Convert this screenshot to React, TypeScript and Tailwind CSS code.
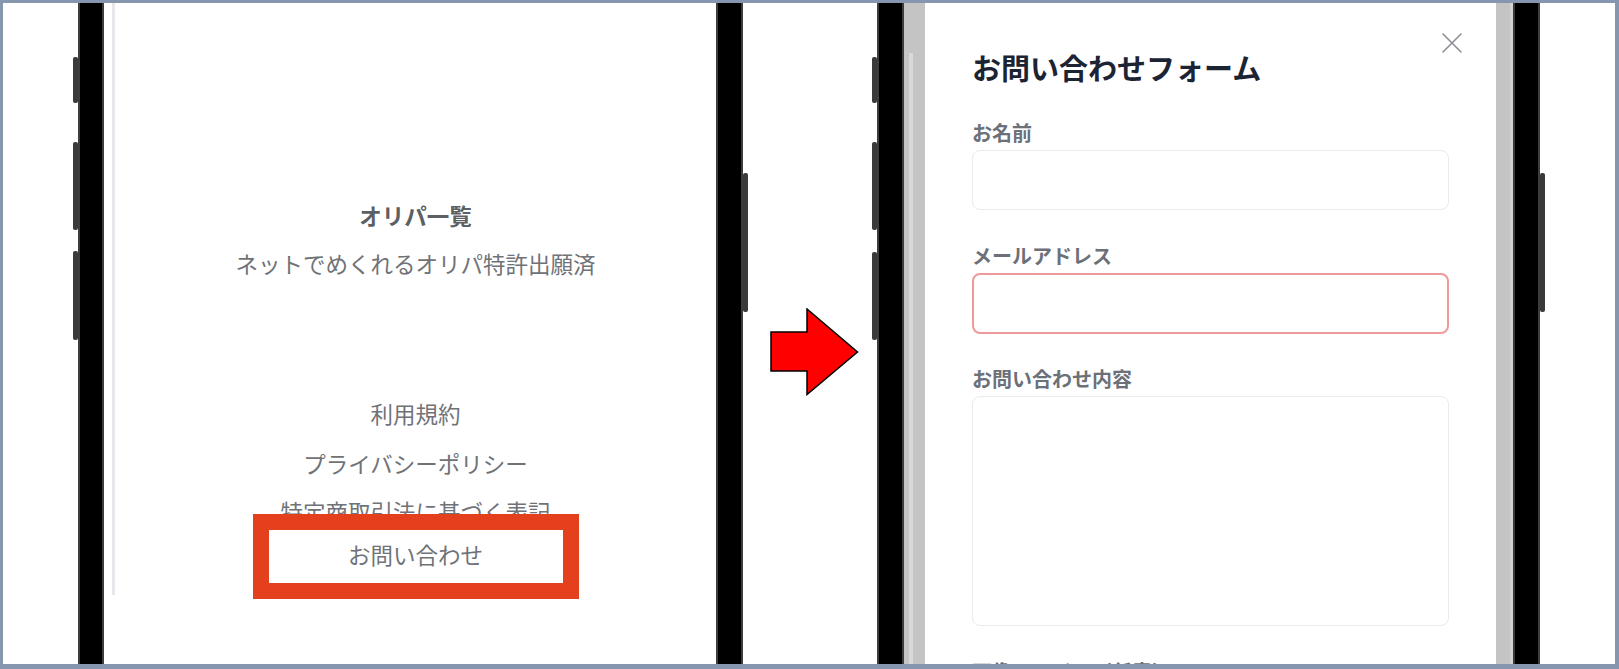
import React from "react";

const FONT = { fontFamily: '"Noto Sans CJK JP", "Noto Sans", sans-serif' };

function SideButtons({ items }: { items: { mt: number; h: number }[] }) {
  return (
    <div className="flex w-[5px] shrink-0 flex-col">
      {items.map((b, i) => (
        <div
          key={i}
          className="w-[5px] shrink-0 rounded-[2px] bg-[#3a3a3a]"
          style={{ marginTop: b.mt, height: b.h }}
        />
      ))}
    </div>
  );
}

function Bar({ w }: { w: string }) {
  return <div className={`${w} h-full shrink-0 border-x-2 border-[#3c3c3c] bg-black`} />;
}

export default function App() {
  return (
    <div
      className="box-border flex h-[669px] w-[1619px] overflow-hidden border-t-[3px] border-r-4 border-b-[5px] border-l-[3px] border-[#8596ae] bg-white"
      style={FONT}
    >
      {/* left margin */}
      <div className="w-[70px] shrink-0" />

      {/* left phone */}
      <SideButtons
        items={[
          { mt: 54, h: 46 },
          { mt: 39, h: 88 },
          { mt: 21, h: 89 },
        ]}
      />
      <Bar w="w-[26px]" />
      <div className="relative flex h-full w-[612px] shrink-0 bg-white">
        <div className="ml-[8px] h-[592px] w-[3px] shrink-0 bg-[#e6e8ec]" />
        <div className="flex flex-1 flex-col items-center pt-[188px] text-[22.5px] text-[#6f7277]">
          <div className="h-[48px] shrink-0 leading-[48px] font-bold text-[#5c5f64]">オリパ一覧</div>
          <div className="h-[48px] shrink-0 leading-[48px]">ネットでめくれるオリパ特許出願済</div>
          <div className="mt-[102px] h-[48px] shrink-0 leading-[48px]">利用規約</div>
          <div className="mt-[2px] h-[48px] shrink-0 leading-[48px]">プライバシーポリシー</div>
          <div className="mt-[2px] h-[44px] shrink-0 leading-[44px]">特定商取引法に基づく表記</div>
          <div className="h-[42px] shrink-0 leading-[42px]">お問い合わせ</div>
        </div>
        <div className="absolute left-[149px] top-[511px] h-[85px] w-[326px] border-[16px] border-[#e4401e]" />
      </div>
      <Bar w="w-[27px]" />
      <SideButtons items={[{ mt: 170, h: 139 }]} />

      {/* arrow */}
      <div className="w-[22px] shrink-0" />
      <div className="flex w-[89px] shrink-0 flex-col pt-[305px]">
        <svg width="89" height="88" viewBox="0 0 89 88">
          <polygon
            points="1,24 37,24 37,1 87.5,44 37,86.5 37,63 1,63"
            fill="#ff0000"
            stroke="#000"
            strokeWidth="1.5"
            strokeLinejoin="miter"
          />
        </svg>
      </div>
      <div className="w-[13px] shrink-0" />

      {/* right phone */}
      <SideButtons
        items={[
          { mt: 54, h: 46 },
          { mt: 39, h: 88 },
          { mt: 22, h: 88 },
        ]}
      />
      <Bar w="w-[27px]" />
      <div className="flex h-full w-[609px] shrink-0">
        {/* dimmed left strip */}
        <div className="flex w-[21px] shrink-0">
          <div className="w-[5px] bg-[#c4c4c4]" />
          <div className="flex w-[4px] flex-col">
            <div className="h-[50px] shrink-0 bg-[#c4c4c4]" />
            <div className="flex-1 bg-[#d6d8dc]" />
          </div>
          <div className="flex-1 bg-[#c4c4c4]" />
        </div>

        {/* modal */}
        <div className="relative flex w-[571px] shrink-0 flex-col overflow-hidden bg-white px-[47px] pt-[46px]">
          <button className="absolute right-[34px] top-[30px] h-[20px] w-[20px]">
            <svg width="20" height="20" viewBox="0 0 20 20" fill="none">
              <path d="M1 1 L19 19 M19 1 L1 19" stroke="#8b8f95" strokeWidth="1.6" strokeLinecap="round" />
            </svg>
          </button>
          <h2 className="h-[36px] shrink-0 text-[29px] font-bold leading-[36px] text-[#1c2434]">
            お問い合わせフォーム
          </h2>

          <label className="mt-[36px] h-[24px] shrink-0 text-[20px] font-bold leading-[24px] text-[#6b7079]">
            お名前
          </label>
          <div className="mt-[5px] h-[60px] shrink-0 rounded-[8px] border border-[#ebebeb] bg-white" />

          <label className="mt-[34px] h-[24px] shrink-0 text-[20px] font-bold leading-[24px] text-[#6b7079]">
            メールアドレス
          </label>
          <div className="mt-[5px] h-[61px] shrink-0 rounded-[8px] border-2 border-[#ef9a9a] bg-white" />

          <label className="mt-[33px] h-[24px] shrink-0 text-[20px] font-bold leading-[24px] text-[#6b7079]">
            お問い合わせ内容
          </label>
          <div className="mt-[5px] h-[230px] shrink-0 rounded-[8px] border border-[#ebebeb] bg-white" />

          <label className="mt-[34px] h-[24px] shrink-0 text-[20px] font-bold leading-[24px] text-[#6b7079]">
            画像ファイル（任意）
          </label>
        </div>

        {/* dimmed right strip */}
        <div className="flex w-[17px] shrink-0">
          <div className="flex-1 bg-[#c4c4c4]" />
          <div className="w-[3px] bg-[#d2d2d2]" />
        </div>
      </div>
      <Bar w="w-[27px]" />
      <SideButtons items={[{ mt: 170, h: 139 }]} />

      <div className="flex-1" />
    </div>
  );
}
